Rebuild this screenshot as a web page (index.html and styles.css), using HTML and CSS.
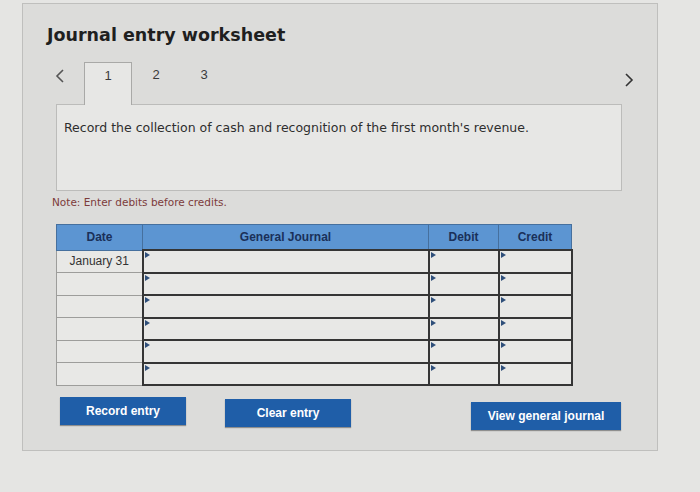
FILE: index.html
```html
<!DOCTYPE html>
<html>
<head>
  <title>Journal entry worksheet</title>
  <link rel="stylesheet" href="styles.css">
</head>
<body>
  <div class="worksheet">
    <h1 class="ws-title">Journal entry worksheet</h1>

    <div class="tabs">
      <span class="tab-arrow prev">
        <svg width="10" height="14" viewBox="0 0 10 14"><path d="M8 1 L2 7 L8 13" fill="none" stroke="#555" stroke-width="1.6"/></svg>
      </span>
      <span class="tab active">1</span>
      <span class="tab">2</span>
      <span class="tab">3</span>
      <span class="tab-arrow next">
        <svg width="10" height="14" viewBox="0 0 10 14"><path d="M2 1 L8 7 L2 13" fill="none" stroke="#333" stroke-width="1.6"/></svg>
      </span>
    </div>

    <div class="tab-body">
      Record the collection of cash and recognition of the first month's revenue.
    </div>

    <div class="note">Note: Enter debits before credits.</div>

    <table class="journal">
      <thead>
        <tr>
          <th class="col-date">Date</th>
          <th class="col-account">General Journal</th>
          <th class="col-debit">Debit</th>
          <th class="col-credit">Credit</th>
        </tr>
      </thead>
      <tbody>
        <tr>
          <td class="date">January 31</td>
          <td class="entry"></td>
          <td class="entry"></td>
          <td class="entry"></td>
        </tr>
        <tr>
          <td class="date"></td>
          <td class="entry"></td>
          <td class="entry"></td>
          <td class="entry"></td>
        </tr>
        <tr>
          <td class="date"></td>
          <td class="entry"></td>
          <td class="entry"></td>
          <td class="entry"></td>
        </tr>
        <tr>
          <td class="date"></td>
          <td class="entry"></td>
          <td class="entry"></td>
          <td class="entry"></td>
        </tr>
        <tr>
          <td class="date"></td>
          <td class="entry"></td>
          <td class="entry"></td>
          <td class="entry"></td>
        </tr>
        <tr>
          <td class="date"></td>
          <td class="entry"></td>
          <td class="entry"></td>
          <td class="entry"></td>
        </tr>
      </tbody>
    </table>

    <div class="actions">
      <button class="btn btn-record">Record entry</button>
      <button class="btn btn-clear">Clear entry</button>
      <button class="btn btn-view">View general journal</button>
    </div>
  </div>
</body>
</html>
```

FILE: styles.css
```css
body {
  margin: 0;
  background-color: #e5e5e3;
  font-family: "DejaVu Sans", Verdana, sans-serif;
  color: #2b2b2b;
}

.worksheet {
  margin: 3px 0 0 22px;
  width: 636px;
  height: 448px;
  box-sizing: border-box;
  background-color: #dcdcda;
  border: 1px solid #bfbfbd;
}

.ws-title {
  margin: 19px 0 0 24px;
  font-size: 17.5px;
  font-weight: bold;
  color: #1f1f1f;
  line-height: 24px;
}

.tabs {
  display: flex;
  align-items: stretch;
  height: 42px;
  margin: 15px 0 0 29px;
  width: 588px;
  position: relative;
  z-index: 1;
}

.tab-arrow {
  width: 32px;
  padding: 6px 0 0 3px;
  box-sizing: border-box;
}

.tab-arrow.next {
  margin-left: auto;
  width: 16px;
  padding: 10px 0 0 0;
}

.tab {
  width: 48px;
  box-sizing: border-box;
  text-align: center;
  font-family: "Liberation Sans", Arial, sans-serif;
  font-size: 13px;
  line-height: 26px;
  color: #3a3a3a;
}

.tab.active {
  background-color: #e7e7e5;
  border: 1px solid #a9a9a7;
  border-bottom: none;
  margin-bottom: -1px;
}

.tab-body {
  margin-left: 33px;
  width: 566px;
  height: 87px;
  box-sizing: border-box;
  background-color: #e7e7e5;
  border: 1px solid #bcbcba;
  padding: 15px 0 0 7px;
  font-size: 12.5px;
  color: #2e2e2e;
}

.note {
  margin: 5px 0 0 29px;
  font-size: 10.5px;
  color: #7d3b3b;
}

.journal {
  margin: 16px 0 0 33px;
  border-collapse: collapse;
  font-family: "Liberation Sans", Arial, sans-serif;
  font-size: 12px;
}

.journal th {
  height: 24px;
  background-color: #5c95d2;
  color: #1a3059;
  font-weight: bold;
  border: 1px solid #46709e;
  padding: 0;
}

.col-date { width: 85px; }
.col-account { width: 285px; }
.col-debit { width: 69px; }
.col-credit { width: 72px; }

.journal td {
  height: 20.5px;
  padding: 0;
  background-color: #e8e8e6;
}

.journal td.date {
  border: 1px solid #9d9d9b;
  text-align: center;
  color: #333;
}

.journal td.entry {
  border: 2px solid #353535;
  position: relative;
}

.journal td.entry::before {
  content: "";
  position: absolute;
  top: 1px;
  left: 1px;
  border-top: 3px solid transparent;
  border-bottom: 3px solid transparent;
  border-left: 5px solid #2f4f7a;
}

.actions {
  display: flex;
  margin: 11px 0 0 37px;
}

.btn {
  height: 28px;
  border: none;
  background-color: #1f5ea8;
  color: #fff;
  font-family: "Liberation Sans", Arial, sans-serif;
  font-weight: bold;
  font-size: 12px;
  box-shadow: 0 1px 1px rgba(0, 0, 0, 0.35);
  padding: 0;
}

.btn-record { width: 126px; }
.btn-clear { width: 126px; margin-left: 39px; margin-top: 2px; }
.btn-view { width: 150px; margin-left: 120px; margin-top: 5px; }
```
